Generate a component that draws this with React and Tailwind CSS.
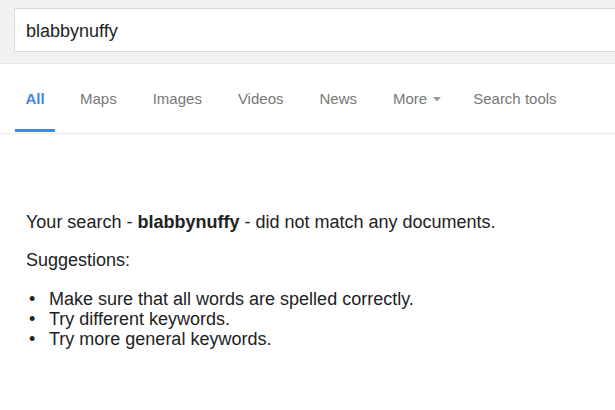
export default function App() {
  const tabs = ["Maps", "Images", "Videos", "News"];
  const items = [
    "Make sure that all words are spelled correctly.",
    "Try different keywords.",
    "Try more general keywords.",
  ];
  return (
    <div className="w-[615px] h-[410px] bg-white overflow-hidden" style={{ fontFamily: '"Liberation Sans", Arial, sans-serif' }}>
      <div className="h-[64px] bg-[#f1f1f1] pt-[8px] pl-[14px] border-b border-[#e5e5e5] overflow-hidden">
        <div className="w-[620px] h-[44px] bg-white border border-[#d9d9d9] flex items-center pl-[11px] pt-[2px] text-[18px] text-[#222]">
          blabbynuffy
        </div>
      </div>
      <div className="h-[70px] border-b border-[#ebebeb] flex items-start pl-[15px]">
        <div className="flex flex-col items-center w-[40px] h-full">
          <div className="pt-[24px] h-[65px] text-[15px] font-bold text-[#4285f4]">All</div>
          <div className="w-[40px] h-[3px] bg-[#4285f4]" />
        </div>
        <div className="flex items-center pt-[24px] text-[15px] text-[#777] ml-[25px] gap-[36px]">
          {tabs.map((t) => (
            <span key={t}>{t}</span>
          ))}
          <span className="flex items-center">
            More
            <svg width="8" height="5" viewBox="0 0 8 5" className="ml-[6px]">
              <path d="M0 0 L8 0 L4 4.5 Z" fill="#999" />
            </svg>
          </span>
          <span className="-ml-[4px]">Search tools</span>
        </div>
      </div>
      <div className="pl-[26px] pt-[78px] text-[18px] text-[#222] leading-[20px]">
        <p>
          Your search - <b>blabbynuffy</b> - did not match any documents.
        </p>
        <p className="mt-[18px]">Suggestions:</p>
        <ul className="mt-[19px]">
          {items.map((it) => (
            <li key={it} className="flex">
              <span className="w-[23px] pl-[3px]">•</span>
              <span>{it}</span>
            </li>
          ))}
        </ul>
      </div>
    </div>
  );
}
